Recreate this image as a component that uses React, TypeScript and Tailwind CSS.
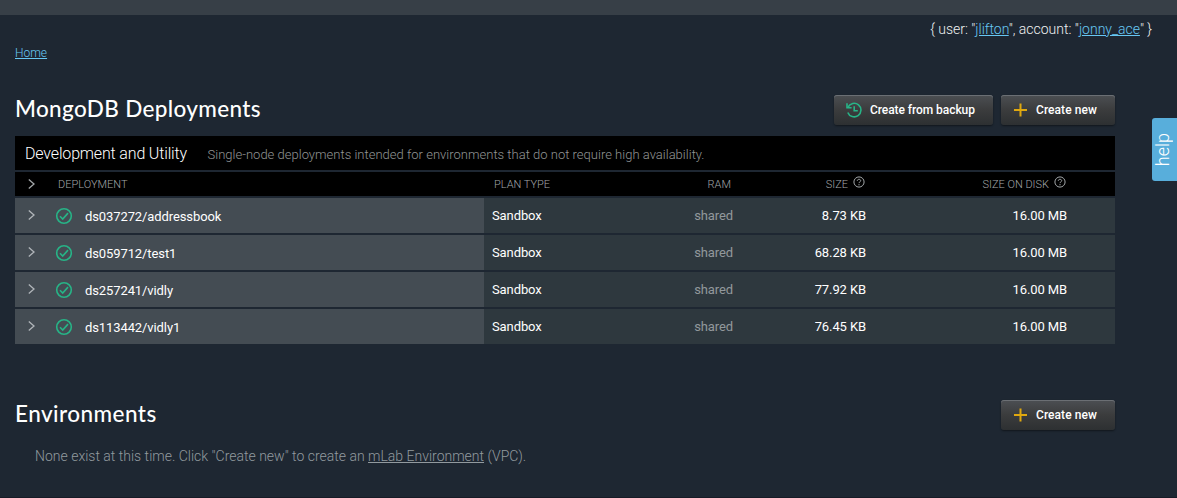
import type { ReactNode } from "react";

const rows = [
  { name: "ds037272/addressbook", plan: "Sandbox", ram: "shared", size: "8.73 KB", disk: "16.00 MB" },
  { name: "ds059712/test1", plan: "Sandbox", ram: "shared", size: "68.28 KB", disk: "16.00 MB" },
  { name: "ds257241/vidly", plan: "Sandbox", ram: "shared", size: "77.92 KB", disk: "16.00 MB" },
  { name: "ds113442/vidly1", plan: "Sandbox", ram: "shared", size: "76.45 KB", disk: "16.00 MB" },
];

function Chevron() {
  return (
    <svg className="block h-[12px] w-[8px] shrink-0" viewBox="0 0 8 12" fill="none" stroke="currentColor" strokeWidth="1.3">
      <path d="M.8 1.500 6 6 .8 10.500" />
    </svg>
  );
}

function CheckCircle() {
  return (
    <svg className="block h-[18px] w-[18px] shrink-0 text-[#27b487]" viewBox="0 0 18 18" fill="none" stroke="currentColor" strokeWidth="1.6">
      <circle cx="9" cy="9" r="7.3" />
      <path d="m5 9.3 2.7 2.8 5.3-6" />
    </svg>
  );
}

function Help() {
  return (
    <svg className="block h-[12px] w-[12px] shrink-0" viewBox="0 0 12 12" fill="none" stroke="currentColor" strokeWidth="1">
      <circle cx="6" cy="6" r="5.1" />
      <path d="M4.3 4.9c0-1 .7-1.6 1.7-1.6s1.7.6 1.7 1.4C7.7 5.800 6 5.900 6 7.100" />
      <path d="M6 8.100v1.200" />
    </svg>
  );
}

function Plus() {
  return (
    <svg className="block h-[14px] w-[14px] shrink-0 text-[#e0a80f]" viewBox="0 0 14 14" fill="none" stroke="currentColor" strokeWidth="2">
      <path d="M6.500 .5v13M0 7h13" />
    </svg>
  );
}

function History() {
  return (
    <svg className="block h-[16px] w-[16px] shrink-0 text-[#27b487]" viewBox="0 0 16 16" fill="none" stroke="currentColor" strokeWidth="1.6">
      <path d="M2 5.200A6.800 6.800 0 1 1 1.800 10.500" />
      <path d="M1 1.200v4.600h4.600" />
      <path d="M8.200 4.300v4.400h3.600" />
    </svg>
  );
}

function Button({ children, className }: { children: ReactNode; className: string }) {
  return (
    <button
      className={`flex h-[30px] items-center rounded-[3px] bg-linear-to-b from-[#4c4f53] via-[#3b3c3d] to-[#2d3032] text-left text-[12px] font-medium text-white shadow-[0_1px_2px_rgba(0,0,0,0.45),inset_0_1px_0_#6b6f74] ${className}`}
    >
      {children}
    </button>
  );
}

function CreateNew() {
  return (
    <Button className="w-[114px] pl-[13px]">
      <Plus />
      <span className="ml-2 tracking-[0.06px]">Create new</span>
    </Button>
  );
}

export default function App() {
  return (
    <div className="relative flex h-[498px] w-[1177px] flex-col overflow-hidden border-b border-[#171b26] bg-[#1e2732] font-[Roboto,sans-serif] text-white">
      <div className="h-[15px] shrink-0 bg-[#373f47]" />
      <div className="flex h-[28px] shrink-0 items-center justify-end pr-[25px] text-[14px] font-light text-[#eef0f1]">
        <span>
          {'{ user: "'}
          <a className="text-[#67c7f3] underline">jlifton</a>
          {'", account: "'}
          <a className="text-[#67c7f3] underline">jonny_ace</a>
          {'" }'}
        </span>
      </div>
      <nav className="flex h-[20px] shrink-0 items-center pl-[15px] text-[12px] font-light text-[#67c7f3]">
        <a className="underline">Home</a>
      </nav>

      <main className="flex w-[1115px] flex-col pl-[15px]">
        <header className="mt-8 flex h-[30px] items-center justify-between">
          <h1 className="pb-[3px] font-[Lato,sans-serif] text-[22.5px] font-medium leading-[27px] tracking-[0.34px]">MongoDB Deployments</h1>
          <div className="flex gap-2">
            <Button className="w-[159px] pl-[12px]">
              <History />
              <span className="ml-[8px] tracking-[-0.06px]">Create from backup</span>
            </Button>
            <CreateNew />
          </div>
        </header>

        <section className="mt-[11px] flex flex-col gap-[2px] text-[13px]">
          <div className="flex h-[34px] items-baseline bg-black pl-[10px] leading-[36px]">
            <h2 className="w-[182.5px] text-[16px] font-light tracking-[-0.16px]">Development and Utility</h2>
            <p className="text-[13px] font-light tracking-[0.01px] text-[#929595]">
              Single-node deployments intended for environments that do not require high availability.
            </p>
          </div>
          <div className="flex h-[24px] items-center bg-black text-[11px] font-light text-[#a2a6a8]">
            <div className="flex w-[469px] items-center pl-[13px]">
              <Chevron />
              <span className="ml-[22px] pt-[2px]">DEPLOYMENT</span>
            </div>
            <div className="w-[156px] pl-[10px] pt-[2px]">PLAN TYPE</div>
            <div className="w-[93px] pr-[2px] pt-[2px] text-right">RAM</div>
            <div className="flex w-[133px] items-center justify-end gap-[5px] pr-[1px]">
              <span className="pt-[2px]">SIZE</span>
              <span className="-mt-1">
                <Help />
              </span>
            </div>
            <div className="flex w-[201px] items-center justify-end gap-[5px] pr-[1px]">
              <span className="pt-[2px]">SIZE ON DISK</span>
              <span className="-mt-1">
                <Help />
              </span>
            </div>
          </div>
          {rows.map((r) => (
            <div key={r.name} className="flex h-[35px] items-center bg-[#2e383e] tracking-[-0.1px]">
              <div className="flex h-full w-[469px] items-center bg-[#444c53] pl-[13px]">
                <span className="-mt-[1px] text-[#b0b5b9]">
                  <Chevron />
                </span>
                <span className="ml-[19px] mt-[1px]">
                  <CheckCircle />
                </span>
                <span className="ml-[12px] mt-[2px]">{r.name}</span>
              </div>
              <div className="w-[156px] pl-[8px]">{r.plan}</div>
              <div className="w-[93px] text-right text-[#92989c]">{r.ram}</div>
              <div className="w-[133px] text-right">{r.size}</div>
              <div className="w-[201px] text-right">{r.disk}</div>
            </div>
          ))}
        </section>

        <header className="mt-14 flex h-[30px] items-center justify-between">
          <h1 className="pb-[3px] font-[Lato,sans-serif] text-[22.5px] font-medium leading-[27px] tracking-[0.45px]">Environments</h1>
          <CreateNew />
        </header>
        <p className="mt-4 pl-5 text-[14px] font-light leading-[20px] text-[#929a9f]">
          None exist at this time. Click "Create new" to create an <a className="underline">mLab Environment</a> (VPC).
        </p>
      </main>

      <aside className="absolute right-0 top-[118px] flex h-[63px] w-[25px] items-center justify-center rounded-l-[3px] bg-[#58aedb]">
        <span className="rotate-180 pl-[3px] text-[18px] font-light leading-[24px] [writing-mode:vertical-rl]">help</span>
      </aside>
    </div>
  );
}
